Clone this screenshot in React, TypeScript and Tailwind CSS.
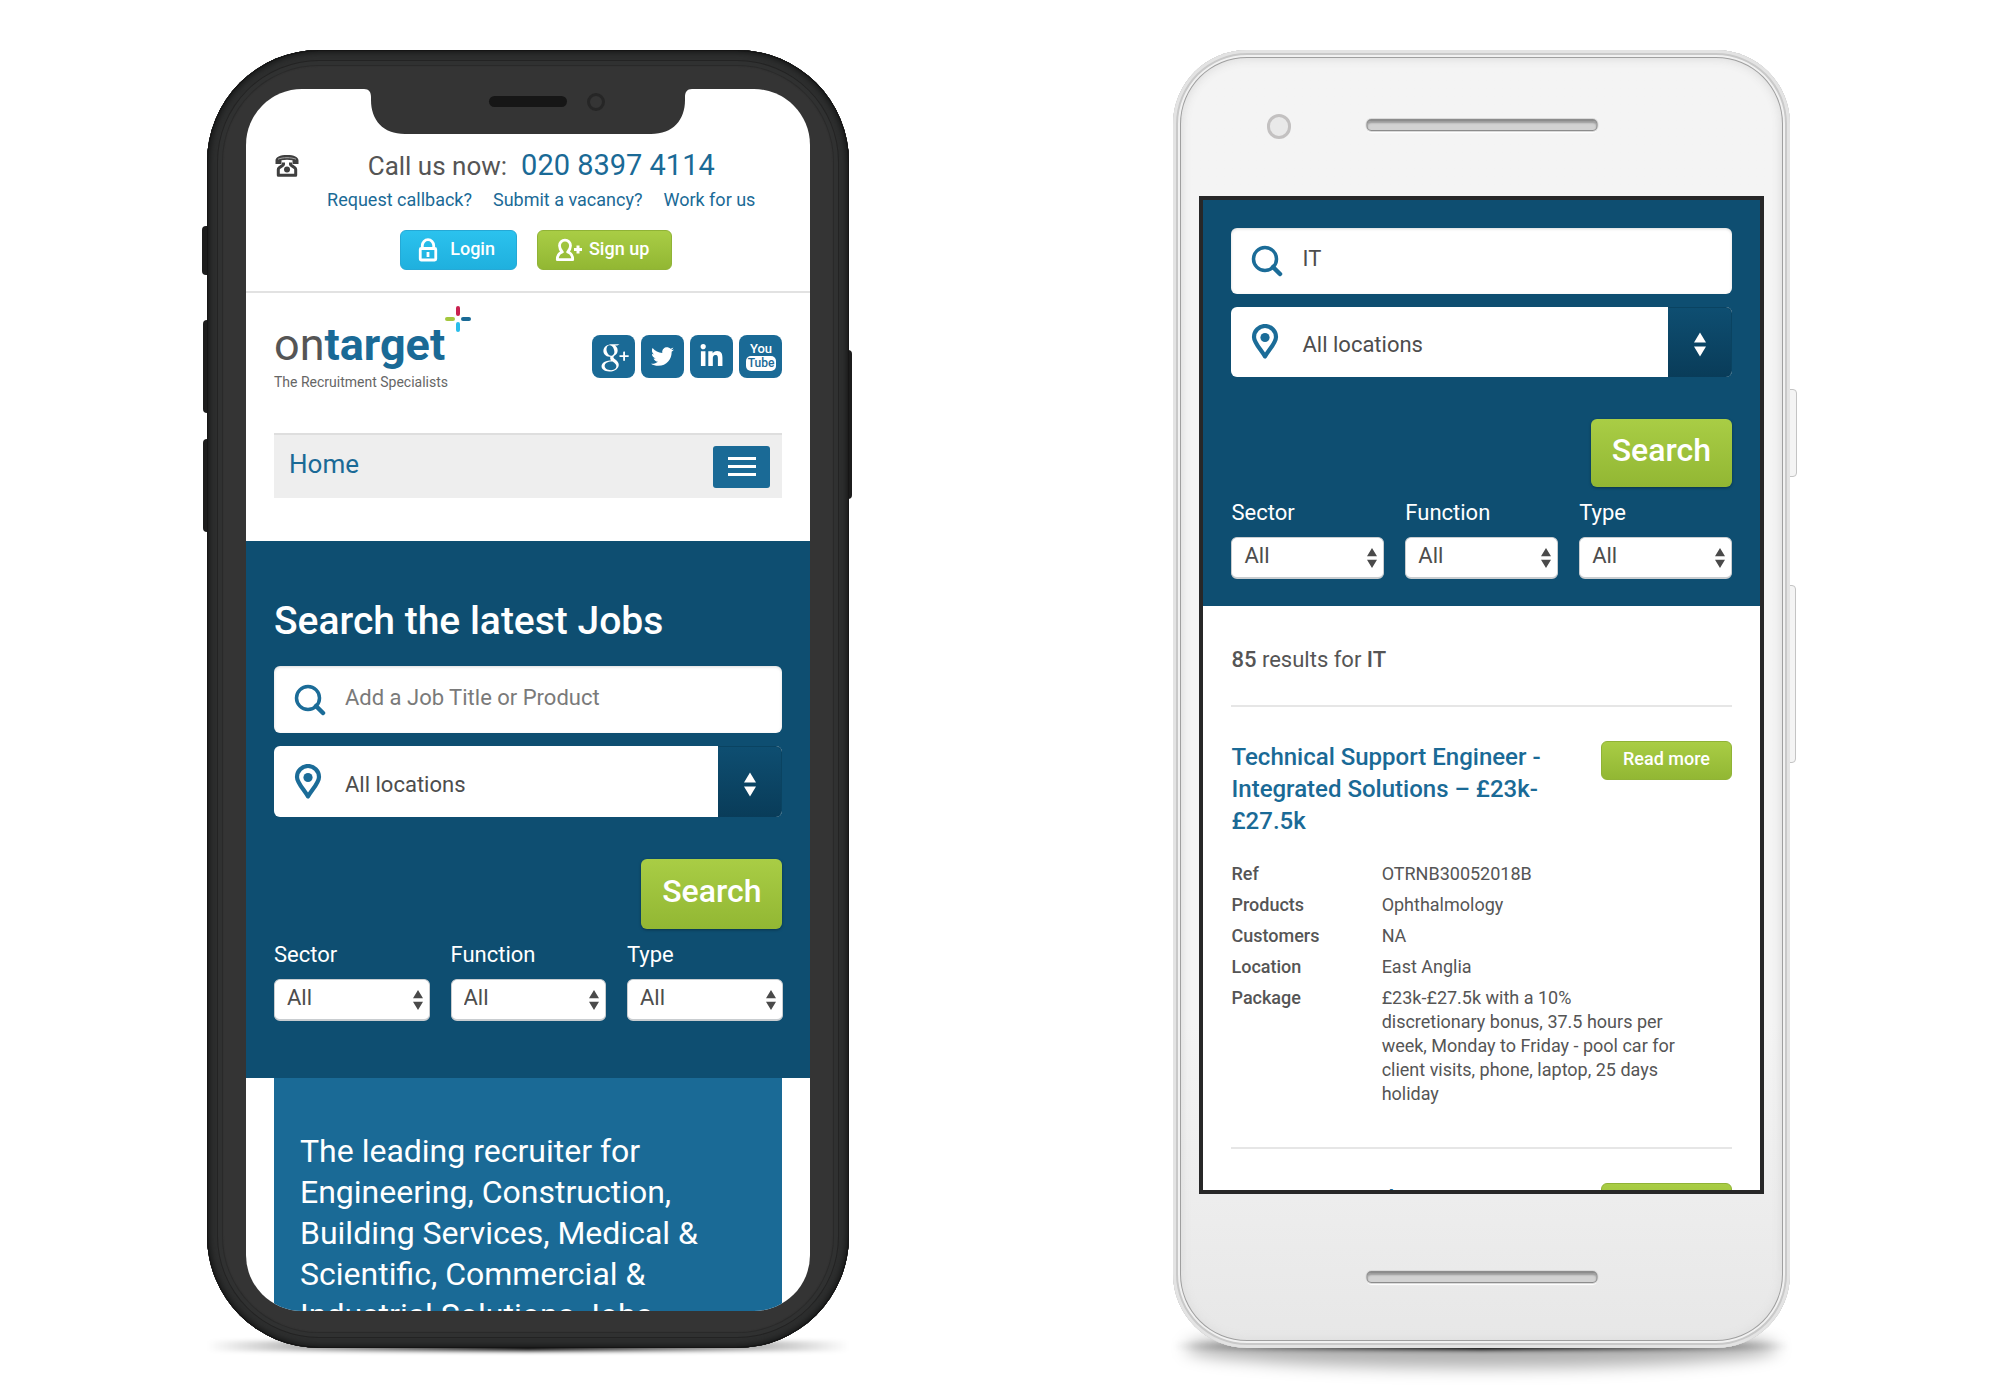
import { useId, type ReactNode } from "react";
import { FaLinkedinIn, FaTwitter } from "react-icons/fa";
import { TiSocialGooglePlus } from "react-icons/ti";

function PhoneIcon() {
  return (
    <svg viewBox="0 0 26 24" className="h-6 w-[26px] shrink-0" fill="none" aria-hidden="true">
      <path d="M1.500 10V6.600C1.500 3 6 1 13 1s11.500 2 11.500 5.600V10h-6V6.300c-3-.8-8-.8-11 0V10Z" fill="#3f3f3f" />
      <path d="M4 5.200c4.500-2 13.500-2 18 0" stroke="#a5a5a5" strokeWidth="1" />
      <path d="M9.500 8.500v2c0 1.200-5.200 2.500-5.200 5v5.700h17.400v-5.700c0-2.500-5.200-3.800-5.200-5v-2" stroke="#3f3f3f" strokeWidth="3" strokeLinejoin="round" />
      <circle cx="13" cy="15.500" r="3" fill="#3f3f3f" />
    </svg>
  );
}

function LockIcon() {
  return (
    <svg viewBox="0 0 20 24" className="h-6 w-5" fill="none" stroke="#fff" strokeWidth="2.800" aria-hidden="true">
      <path d="M4.300 10.500V7.500a5.700 5.800 0 0 1 11.400 0v3" />
      <rect x="2.250" y="10.500" width="15.500" height="11.500" rx="1" />
      <path d="M10 14v5" />
    </svg>
  );
}

function UserAddIcon() {
  return (
    <svg viewBox="0 0 28 24" className="h-6 w-7" fill="none" stroke="#fff" strokeWidth="2.800" strokeLinejoin="round" aria-hidden="true">
      <path d="M7.300 14C5.300 12 4.500 9.800 4.500 7.800A5.500 5.500 0 0 1 10 2.200a5.500 5.500 0 0 1 5.500 5.600c0 2-.8 4.200-2.800 6.200 3.200 1 5 2.800 5 7.700H2.300C2.300 16.800 4.100 15 7.300 14Z" />
      <path d="M23 7.500v8M19 11.500h8" strokeWidth="3" />
    </svg>
  );
}

function SearchIcon() {
  return (
    <svg viewBox="0 0 32 32" className="size-8 shrink-0" fill="none" stroke="#1b6c98" aria-hidden="true">
      <circle cx="14" cy="14" r="11.500" strokeWidth="3.500" />
      <path d="m22 22 7 7" strokeWidth="4.500" strokeLinecap="round" />
    </svg>
  );
}

function PinIcon() {
  return (
    <svg viewBox="0 0 28 36" className="h-9 w-7 shrink-0" fill="none" aria-hidden="true">
      <path d="M14 32.500C10 25.500 3 19 3 13a11 11 0 0 1 22 0c0 6-7 12.500-11 19.500Z" stroke="#1b6c98" strokeWidth="4.200" strokeLinejoin="round" />
      <circle cx="14" cy="13.500" r="4.600" fill="#1b6c98" />
    </svg>
  );
}

function Arrows({ className }: { className: string }) {
  return (
    <svg viewBox="0 0 10 20" className={className} fill="currentColor" aria-hidden="true">
      <path d="M5 0 10 8.300H0ZM0 11.700h10L5 20Z" />
    </svg>
  );
}

function SmallSelect({ label }: { label: string }) {
  const id = useId();
  return (
    <div className="min-w-0 flex-1">
      <label htmlFor={id} className="block text-[22px] leading-7 text-white">
        {label}
      </label>
      <div className="relative mt-2.5">
        <select id={id} className="h-[42px] w-full appearance-none rounded-md border border-b-2 border-[#c9cdd0] bg-white px-3 pb-1 text-[22px] leading-7 text-[#4d4d4d]">
          <option>All</option>
        </select>
        <Arrows className="pointer-events-none absolute top-[11px] right-[7px] h-5 w-2.5 text-[#4a4a4a]" />
      </div>
    </div>
  );
}

function SearchForm({ value, large = false }: { value?: string; large?: boolean }) {
  const keywordId = useId();
  const locationId = useId();
  return (
    <form onSubmit={(e) => e.preventDefault()}>
      <div className={`${large ? "h-[67px]" : "h-[66px]"} flex items-center rounded-md bg-white pl-5 shadow-[inset_0_1px_3px_rgba(0,0,0,0.15)]`}>
        <SearchIcon />
        <label htmlFor={keywordId} className="sr-only">
          Job title or product
        </label>
        <input
          id={keywordId}
          type="text"
          defaultValue={value}
          placeholder="Add a Job Title or Product"
          className="min-w-0 flex-1 bg-transparent pb-1 pl-[19px] text-[22px] leading-7 text-[#4d4d4d] outline-none placeholder:text-[#7a7a7a]"
        />
      </div>
      <div className={`${large ? "h-[71px]" : "h-[70px]"} relative mt-[13px] flex items-center rounded-md bg-white pl-5`}>
        <PinIcon />
        <label htmlFor={locationId} className="sr-only">
          Location
        </label>
        <select id={locationId} className="h-full min-w-0 flex-1 appearance-none bg-transparent pt-1.5 pl-[23px] text-[22px] leading-7 text-[#4d4d4d] outline-none">
          <option>All locations</option>
        </select>
        <div className="pointer-events-none flex h-full w-16 items-center justify-center rounded-r-md border-t border-r border-[#0a4361] bg-linear-to-b from-[#0e4e71] to-[#093c59]">
          <Arrows className="mt-1 h-[27px] w-3 text-white" />
        </div>
      </div>
      <div className="mt-[42px] flex justify-end">
        <button
          type="submit"
          className={`${large ? "h-[70px]" : "h-[68px]"} rounded-md bg-linear-to-b from-[#a9cd45] to-[#92b733] px-[21px] pb-1.5 text-[32px] font-medium text-white shadow-[0_1px_3px_rgba(0,0,0,0.35)]`}
        >
          Search
        </button>
      </div>
      <div className="mt-3 flex gap-[21px]">
        <SmallSelect label="Sector" />
        <SmallSelect label="Function" />
        <SmallSelect label="Type" />
      </div>
    </form>
  );
}

function Logo() {
  return (
    <a href="#" aria-label="ontarget, The Recruitment Specialists" className="relative block pt-[29px] pr-6">
      <span className="block text-[45px] leading-[46px] text-[#555]">
        on<span className="font-bold text-[#1a6a96]">target</span>
      </span>
      <span className="mt-1 block text-sm text-[#666]">The Recruitment Specialists</span>
      <svg viewBox="0 0 28 28" className="absolute top-3 right-0 size-7" strokeWidth="4" strokeLinecap="round" aria-hidden="true">
        <path d="M14 3v6" stroke="#c9214f" />
        <path d="M3 14h6" stroke="#a4c73e" />
        <path d="M19 14h6" stroke="#1a6a96" />
        <path d="M14 19v6" stroke="#29bdea" />
      </svg>
    </a>
  );
}

function SocialLink({ label, children }: { label: string; children: ReactNode }) {
  return (
    <a href="#" aria-label={label} className="flex size-[43px] flex-col items-center justify-center rounded-lg bg-[#1a6a96] text-white">
      {children}
    </a>
  );
}

function HomeScreen() {
  return (
    <>
      <header className="border-b-2 border-[#e2e2e2] px-7 pt-[60px] pb-[21px]">
        <div className="flex">
          <div className="pt-[5px]">
            <PhoneIcon />
          </div>
          <div className="flex-1">
            <p className="text-center text-[26px] leading-8 text-[#555]">
              Call us now:
              <a href="#" className="ml-3.5 text-[29px] text-[#1a6a96]">
                020 8397 4114
              </a>
            </p>
            <nav className="mt-1.5 flex justify-center gap-[21px] text-lg leading-6 text-[#1a6a96]">
              <a href="#">Request callback?</a>
              <a href="#">Submit a vacancy?</a>
              <a href="#">Work for us</a>
            </nav>
          </div>
        </div>
        <div className="mt-[18px] flex justify-center gap-5 pl-4 text-lg font-medium text-white">
          <button className="flex h-10 items-center gap-3 rounded-md border border-[#25a9d6] bg-linear-to-b from-[#2bc2ee] to-[#1fb0de] pr-[21px] pl-[17px]">
            <LockIcon />
            <span className="pb-0.5">Login</span>
          </button>
          <button className="flex h-10 items-center gap-1.5 rounded-md border border-[#90b336] bg-linear-to-b from-[#a9cd45] to-[#92b733] pr-[22px] pl-[17px]">
            <UserAddIcon />
            <span className="pb-0.5">Sign up</span>
          </button>
        </div>
      </header>

      <div className="flex h-[140px] items-start justify-between px-7">
        <Logo />
        <div className="flex gap-1.5 pt-[42px]">
          <SocialLink label="Google Plus">
            <TiSocialGooglePlus size={44} className="shrink-0" />
          </SocialLink>
          <SocialLink label="Twitter">
            <FaTwitter size={23} />
          </SocialLink>
          <SocialLink label="LinkedIn">
            <FaLinkedinIn size={25} />
          </SocialLink>
          <SocialLink label="YouTube">
            <span className="text-[13px] leading-[14px] font-medium">You</span>
            <span className="rounded-[5px] bg-white px-[2px] text-xs leading-[15px] font-medium text-[#1a6a96]">Tube</span>
          </SocialLink>
        </div>
      </div>

      <nav className="mx-7 mb-[43px] flex h-[65px] items-center justify-between border-t-2 border-[#dedede] bg-[#eee] pr-3 pl-[15px]">
        <a href="#" className="pb-1.5 text-[26px] leading-8 text-[#1a6a96]">
          Home
        </a>
        <button aria-label="Menu" className="flex h-[42px] w-[57px] flex-col items-center justify-center gap-[5px] rounded-[3px] bg-[#1a6a96]">
          <span className="h-[3px] w-7 bg-white" />
          <span className="h-[3px] w-7 bg-white" />
          <span className="h-[3px] w-7 bg-white" />
        </button>
      </nav>

      <section className="bg-[#0e4e71] px-7 pt-14 pb-[57px]">
        <h1 className="mb-[21px] text-[39px] leading-[48px] font-medium text-white">Search the latest Jobs</h1>
        <SearchForm large />
      </section>

      <p className="mx-7 bg-[#1a6a96] px-[26px] pt-[53px] text-[32px] leading-[41px] text-white">
        The leading recruiter for
        <br />
        Engineering, Construction,
        <br />
        Building Services, Medical &amp;
        <br />
        Scientific, Commercial &amp;
        <br />
        Industrial Solutions Jobs
      </p>
    </>
  );
}

function JobHeading({ title }: { title: string }) {
  return (
    <div className="flex items-start justify-between">
      <h2 className="w-[70%] text-2xl leading-8 font-medium text-[#1a6a96]">
        <a href="#">{title}</a>
      </h2>
      <button className="h-[39px] rounded-md border border-[#90b336] bg-linear-to-b from-[#a9cd45] to-[#92b733] px-[21px] pb-1 text-lg font-medium text-white">Read more</button>
    </div>
  );
}

const details = [
  ["Ref", "OTRNB30052018B"],
  ["Products", "Ophthalmology"],
  ["Customers", "NA"],
  ["Location", "East Anglia"],
  ["Package", "£23k-£27.5k with a 10%\ndiscretionary bonus, 37.5 hours per week, Monday to Friday - pool car for client visits, phone, laptop, 25 days holiday"],
];

function ResultsScreen() {
  return (
    <>
      <section className="bg-[#0e4e71] px-7 pt-7 pb-[27px]">
        <SearchForm value="IT" />
      </section>
      <section className="px-7 pt-10">
        <p className="border-b-2 border-[#e6e6e6] pb-[31px] text-[22px] leading-7 text-[#555]">
          <strong className="font-medium">85</strong> results for <strong className="font-medium">IT</strong>
        </p>
        <article className="border-b-2 border-[#e6e6e6] pt-[34px] pb-[41px]">
          <JobHeading title="Technical Support Engineer - Integrated Solutions – £23k-£27.5k" />
          <dl className="mt-[25px] grid grid-cols-[30%_61%] gap-y-[7px] text-lg leading-6 text-[#555]">
            {details.map(([name, value]) => (
              <div key={name} className="contents">
                <dt className="font-medium">{name}</dt>
                <dd className="whitespace-pre-line">{value}</dd>
              </div>
            ))}
          </dl>
        </article>
        <article className="pt-[34px]">
          <JobHeading title="Business Development Manager" />
        </article>
      </section>
    </>
  );
}

function Speaker({ className }: { className: string }) {
  return (
    <div className={className}>
      <div className="h-3 rounded-[5px] border border-t-2 border-[#8c8c8c] bg-[#d2d2d2] shadow-[0_0_0_1px_#dadada,0_2px_1px_#fff,inset_0_2px_2px_#9a9a9a]" />
    </div>
  );
}

function DarkPhone({ children }: { children: ReactNode }) {
  return (
    <div className="relative min-w-0 flex-[643]">
      <div className="absolute inset-x-0 -bottom-[3px] h-2.5 bg-linear-to-r from-transparent via-black to-transparent blur-[2px]" />
      <div className="absolute top-[176px] -left-[5px] h-[49px] w-3 rounded-sm bg-[#1c1c1c]" />
      <div className="absolute top-[270px] -left-1 h-[93px] w-3 rounded-sm bg-[#1c1c1c]" />
      <div className="absolute top-[389px] -left-1 h-[93px] w-3 rounded-sm bg-[#1c1c1c]" />
      <div className="absolute top-[300px] -right-[3px] h-[149px] w-3 rounded-sm bg-[#1c1c1c]" />
      <div className="relative rounded-[112px] bg-[#343434] px-[39px] pt-[39px] pb-[37px] shadow-[inset_0_0_0_1px_#151515,inset_0_0_5px_3px_#191a1a,inset_0_0_0_10px_#2d2e2e,inset_0_0_0_11px_#232323,inset_0_0_0_15px_#303131,inset_0_0_1px_16px_#292929]">
        <div className="relative h-[1222px] overflow-hidden rounded-[56px] bg-white">
          {children}
          <svg viewBox="0 0 328 46" className="absolute -top-px left-1/2 h-[46px] w-[328px] -translate-x-1/2" aria-hidden="true">
            <path d="M0 0h328v1c-5 0-7 3-7 8v3c0 20-12 34-34 34H41C19 46 7 32 7 12V9c0-5-2-8-7-8Z" fill="#343434" />
          </svg>
        </div>
        <div className="absolute top-[46px] left-1/2 h-[11px] w-[78px] -translate-x-1/2 rounded-full bg-[#161616]" />
        <div className="absolute top-[43px] left-1/2 ml-[59px] size-[18px] rounded-full border-3 border-[#262626] bg-[#353535]" />
      </div>
    </div>
  );
}

function LightPhone({ children }: { children: ReactNode }) {
  return (
    <div className="relative min-w-0 flex-[617]">
      <div className="absolute inset-x-3 -bottom-5 h-10 rounded-[50%] bg-black/30 blur-[8px]" />
      <div className="absolute inset-x-0 -bottom-0.5 h-2 bg-linear-to-r from-transparent via-black to-transparent blur-[2px]" />
      <div className="absolute top-[339px] -right-[7px] h-[88px] w-3.5 rounded-[4px] border border-[#c4c4c4] bg-[#f4f4f4]" />
      <div className="absolute top-[535px] -right-[6px] h-[178px] w-3.5 rounded-[4px] border border-[#c4c4c4] bg-[#f4f4f4]" />
      <div className="relative rounded-[74px] bg-linear-to-b from-[#f4f4f4] from-75% to-[#e7e7e7] px-[26px] pt-[146px] pb-[154px] shadow-[inset_0_0_0_3px_#e3e3e3,inset_0_0_0_5px_#c9c9c9,inset_0_0_0_7px_#f1f1f1,inset_0_0_0_8px_#9f9f9f,inset_0_0_8px_10px_#dfdfdf]">
        <div className="absolute top-16 left-[94px] h-[25px] w-6 rounded-full border-[3px] border-[#c3c1c1] bg-[#e9e9e9]" />
        <Speaker className="absolute top-[69px] left-1/2 w-[231px] -translate-x-1/2" />
        <div className="h-[998px] overflow-hidden border-4 border-[#272728] bg-white">{children}</div>
        <Speaker className="absolute bottom-[65px] left-1/2 w-[231px] -translate-x-1/2" />
      </div>
    </div>
  );
}

export default function App() {
  return (
    <main className="flex items-start gap-[324px] bg-white pt-[50px] pr-[210px] pb-[52px] pl-[207px] font-[Roboto,sans-serif]">
      <DarkPhone>
        <HomeScreen />
      </DarkPhone>
      <LightPhone>
        <ResultsScreen />
      </LightPhone>
    </main>
  );
}
